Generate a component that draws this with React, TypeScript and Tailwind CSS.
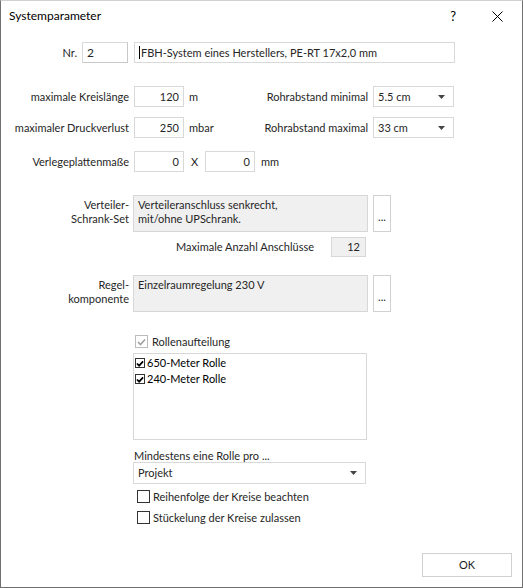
import React from 'react';

const font = { fontFamily: 'Lato, "Liberation Sans", sans-serif' };

function Box({ className = '', children }: { className?: string; children?: React.ReactNode }) {
  return (
    <div className={`border border-[#d9d9d9] bg-white h-[21px] flex items-center px-[4px] ${className}`}>
      {children}
    </div>
  );
}

function Arrow() {
  return (
    <svg width="7" height="4" viewBox="0 0 7 4" className="ml-auto mr-[4px]">
      <path d="M0 0 H7 L3.5 4 Z" fill="#444" />
    </svg>
  );
}

function Check({ checked, disabled, small }: { checked?: boolean; disabled?: boolean; small?: boolean }) {
  const size = small ? 'w-[10px] h-[10px]' : 'w-[13px] h-[13px]';
  return (
    <div
      className={`${size} border flex items-center justify-center bg-white shrink-0 ${
        disabled ? 'border-[#bcbcbc]' : 'border-[#333]'
      }`}
    >
      {checked && (
        <svg width={small ? 8 : 9} height={small ? 7 : 8} viewBox="0 0 9 8">
          <path
            d="M1 4 L3.5 6.5 L8 1.5"
            fill="none"
            stroke={disabled ? '#a0a0a0' : '#000'}
            strokeWidth={small ? 2 : 1.6}
          />
        </svg>
      )}
    </div>
  );
}

export default function App() {
  return (
    <div
      style={font}
      className="w-[523px] h-[588px] bg-white border-l border-r border-b border-[#707070] border-t border-t-[#d0d0d0] text-[11px] leading-[14px] text-[#262626] flex flex-col"
    >
      {/* Title bar */}
      <div className="h-[30px] flex items-center pl-[8px] shrink-0">
        <span className="text-[12px] text-black">Systemparameter</span>
        <span className="ml-auto text-[13px] text-black mr-[36px]">?</span>
        <svg width="11" height="11" viewBox="0 0 11 11" className="mr-[19px]">
          <path d="M0.5 0.5 L10.5 10.5 M10.5 0.5 L0.5 10.5" stroke="#000" strokeWidth="1" />
        </svg>
      </div>

      {/* Nr row */}
      <div className="flex items-center mt-[11px] h-[21px]">
        <div className="w-[76px] text-right">Nr.</div>
        <Box className="ml-[5px] w-[46px] border-r-[#c8c8c8] border-b-[#c8c8c8] text-[12px]">2</Box>
        <Box className="ml-[6px] w-[321px]">
          <span className="w-px h-[13px] bg-black mr-[1px]" />
          FBH-System eines Herstellers, PE-RT 17x2,0 mm
        </Box>
      </div>

      {/* Kreislänge */}
      <div className="flex items-center mt-[23px] h-[21px]">
        <div className="w-[128px] text-right">maximale Kreislänge</div>
        <Box className="ml-[5px] w-[50px] justify-end">120</Box>
        <div className="ml-[5px] w-[60px]">m</div>
        <div className="w-[119px] text-right">Rohrabstand minimal</div>
        <Box className="ml-[5px] w-[81px]">
          5.5 cm
          <Arrow />
        </Box>
      </div>

      {/* Druckverlust */}
      <div className="flex items-center mt-[10px] h-[21px]">
        <div className="w-[128px] text-right">maximaler Druckverlust</div>
        <Box className="ml-[5px] w-[50px] justify-end">250</Box>
        <div className="ml-[5px] w-[60px]">mbar</div>
        <div className="w-[119px] text-right">Rohrabstand maximal</div>
        <Box className="ml-[5px] w-[81px]">
          33 cm
          <Arrow />
        </Box>
      </div>

      {/* Verlegeplatten */}
      <div className="flex items-center mt-[13px] h-[21px]">
        <div className="w-[128px] text-right">Verlegeplattenmaße</div>
        <Box className="ml-[5px] w-[50px] justify-end">0</Box>
        <div className="ml-[7px] w-[14px]">X</div>
        <Box className="w-[50px] justify-end">0</Box>
        <div className="ml-[6px]">mm</div>
      </div>

      {/* Verteiler-Schrank-Set */}
      <div className="flex mt-[23px] h-[37px]">
        <div className="w-[128px] text-right leading-[14px] pt-[3px]">
          Verteiler-
          <br />
          Schrank-Set
        </div>
        <div className="ml-[4px] w-[235px] h-[37px] bg-[#f0f0f0] border border-[#d7d7d7] px-[4px] pt-[2px] leading-[14px]">
          Verteileranschluss senkrecht,
          <br />
          mit/ohne UPSchrank.
        </div>
        <div className="ml-[5px] w-[18px] h-[37px] border border-[#d0d0d0] flex items-center justify-center pt-[6px]">
          ...
        </div>
      </div>

      {/* Maximale Anzahl */}
      <div className="flex items-center mt-[5px] h-[20px]">
        <div className="w-[313px] text-right">Maximale Anzahl Anschlüsse</div>
        <div className="ml-[17px] w-[35px] h-[20px] bg-[#f0f0f0] border border-[#d7d7d7] flex items-center justify-end pr-[5px]">
          12
        </div>
      </div>

      {/* Regelkomponente */}
      <div className="flex mt-[18px] h-[37px]">
        <div className="w-[128px] text-right leading-[14px] pt-[3px]">
          Regel-
          <br />
          komponente
        </div>
        <div className="ml-[4px] w-[235px] h-[37px] bg-[#f0f0f0] border border-[#d7d7d7] px-[4px] pt-[2px] leading-[14px]">
          Einzelraumregelung 230 V
        </div>
        <div className="ml-[5px] w-[18px] h-[37px] border border-[#d0d0d0] flex items-center justify-center pt-[6px]">
          ...
        </div>
      </div>

      {/* Rollenaufteilung */}
      <div className="flex items-center mt-[23px] ml-[134px] h-[13px]">
        <Check checked disabled />
        <span className="ml-[4px]">Rollenaufteilung</span>
      </div>

      <div className="ml-[132px] mt-[5px] w-[234px] h-[87px] border border-[#d7d7d7] pt-[1px] pl-[1px]">
        <div className="flex items-center h-[16px]">
          <Check checked small />
          <span className="ml-[2px] text-black">650-Meter Rolle</span>
        </div>
        <div className="flex items-center h-[16px]">
          <Check checked small />
          <span className="ml-[2px] text-black">240-Meter Rolle</span>
        </div>
      </div>

      {/* Mindestens */}
      <div className="ml-[133px] mt-[9px] h-[13px] leading-[13px]">Mindestens eine Rolle pro ...</div>
      <Box className="ml-[132px] w-[233px] h-[22px]">
        Projekt
        <Arrow />
      </Box>

      <div className="flex items-center ml-[136px] mt-[6px] h-[13px]">
        <Check />
        <span className="ml-[3px]">Reihenfolge der Kreise beachten</span>
      </div>
      <div className="flex items-center ml-[136px] mt-[8px] h-[13px]">
        <Check />
        <span className="ml-[3px]">Stückelung der Kreise zulassen</span>
      </div>

      {/* OK */}
      <div className="flex justify-end mt-[29px] mr-[10px]">
        <button className="w-[90px] h-[24px] border border-[#d0d0d0] bg-white text-[11px] text-[#1e1e1e]">
          OK
        </button>
      </div>
    </div>
  );
}
